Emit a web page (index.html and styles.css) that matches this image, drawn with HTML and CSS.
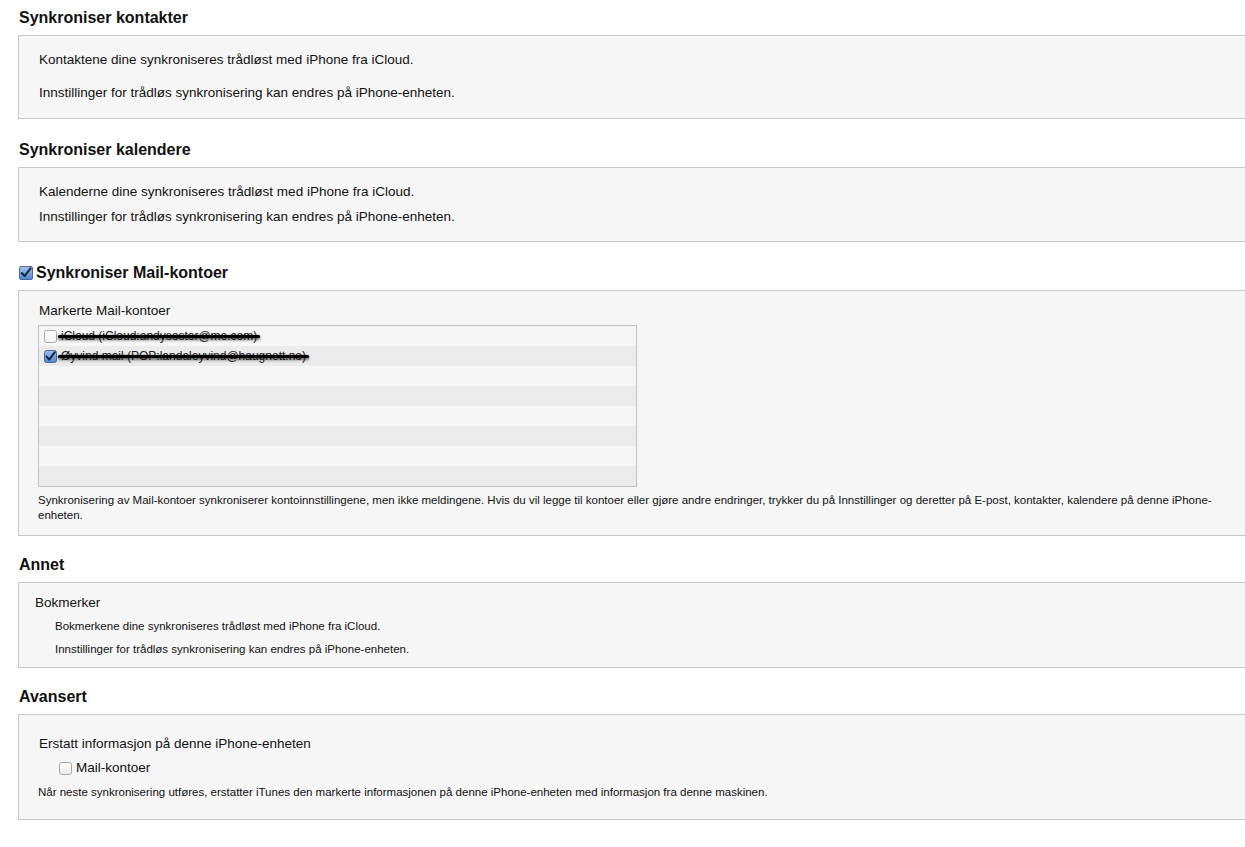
FILE: index.html
```html
<!DOCTYPE html>
<html lang="no">
<head>
<meta charset="utf-8">
<title>Synkronisering</title>
<link rel="stylesheet" href="styles.css">
</head>
<body>
<main class="page">
  <section class="section first">
    <h2 class="heading">Synkroniser kontakter</h2>
    <div class="box box-contacts">
      <p class="line">Kontaktene dine synkroniseres trådløst med iPhone fra iCloud.</p>
      <p class="line second">Innstillinger for trådløs synkronisering kan endres på iPhone-enheten.</p>
    </div>
  </section>

  <section class="section">
    <h2 class="heading">Synkroniser kalendere</h2>
    <div class="box box-calendars">
      <p class="line">Kalenderne dine synkroniseres trådløst med iPhone fra iCloud.</p>
      <p class="line second">Innstillinger for trådløs synkronisering kan endres på iPhone-enheten.</p>
    </div>
  </section>

  <section class="section">
    <h2 class="heading heading-check">
      <svg class="cb" width="14" height="14" viewBox="0 0 14 14"><defs><linearGradient id="gb1" x1="0" y1="0" x2="0" y2="1"><stop offset="0" stop-color="#a5c6ee"/><stop offset="1" stop-color="#4f86d3"/></linearGradient></defs><rect x="0.5" y="0.5" width="13" height="13" rx="1.5" fill="url(#gb1)" stroke="#4a6a9a"/><path d="M2.8 7 L5.6 10.2 L11.6 2.4" fill="none" stroke="#16243d" stroke-width="2" stroke-linecap="round" stroke-linejoin="round"/></svg>
      <span>Synkroniser Mail-kontoer</span>
    </h2>
    <div class="box box-mail">
      <p class="label">Markerte Mail-kontoer</p>
      <div class="list">
        <div class="row">
          <svg class="cb" width="13" height="13" viewBox="0 0 13 13"><defs><linearGradient id="gw1" x1="0" y1="0" x2="0" y2="1"><stop offset="0" stop-color="#ffffff"/><stop offset="1" stop-color="#f0f0f0"/></linearGradient></defs><rect x="0.5" y="0.5" width="12" height="12" rx="2" fill="url(#gw1)" stroke="#a9a9a9"/></svg>
          <span class="account redacted r1">iCloud (iCloud:andysoster@me.com)</span>
        </div>
        <div class="row alt">
          <svg class="cb" width="13" height="13" viewBox="0 0 13 13"><defs><linearGradient id="gb2" x1="0" y1="0" x2="0" y2="1"><stop offset="0" stop-color="#9cc0ec"/><stop offset="1" stop-color="#4f86d3"/></linearGradient></defs><rect x="0.5" y="0.5" width="12" height="12" rx="2" fill="url(#gb2)" stroke="#4a6a9a"/><path d="M2.6 6.6 L5.2 9.6 L10.8 2.2" fill="none" stroke="#16243d" stroke-width="2" stroke-linecap="round" stroke-linejoin="round"/></svg>
          <span class="account redacted r2">Øyvind mail (POP:landaleyvind@haugnett.no)</span>
        </div>
        <div class="row"></div>
        <div class="row alt"></div>
        <div class="row"></div>
        <div class="row alt"></div>
        <div class="row"></div>
        <div class="row alt"></div>
      </div>
      <p class="note">Synkronisering av Mail-kontoer synkroniserer kontoinnstillingene, men ikke meldingene. Hvis du vil legge til kontoer eller gjøre andre endringer, trykker du på Innstillinger og deretter på E-post, kontakter, kalendere på denne iPhone-enheten.</p>
    </div>
  </section>

  <section class="section tight">
    <h2 class="heading">Annet</h2>
    <div class="box box-other">
      <p class="label">Bokmerker</p>
      <p class="sub">Bokmerkene dine synkroniseres trådløst med iPhone fra iCloud.</p>
      <p class="sub second">Innstillinger for trådløs synkronisering kan endres på iPhone-enheten.</p>
    </div>
  </section>

  <section class="section tight">
    <h2 class="heading">Avansert</h2>
    <div class="box box-advanced">
      <p class="label">Erstatt informasjon på denne iPhone-enheten</p>
      <div class="option">
        <svg class="cb" width="13" height="13" viewBox="0 0 13 13"><defs><linearGradient id="gw2" x1="0" y1="0" x2="0" y2="1"><stop offset="0" stop-color="#ffffff"/><stop offset="1" stop-color="#ededed"/></linearGradient></defs><rect x="0.5" y="0.5" width="12" height="12" rx="2.5" fill="url(#gw2)" stroke="#a9a9a9"/></svg>
        <span>Mail-kontoer</span>
      </div>
      <p class="note">Når neste synkronisering utføres, erstatter iTunes den markerte informasjonen på denne iPhone-enheten med informasjon fra denne maskinen.</p>
    </div>
  </section>
</main>
</body>
</html>
```

FILE: styles.css
```css
html, body {
  margin: 0;
  padding: 0;
  background: #ffffff;
}

body {
  font-family: "Liberation Sans", Arial, Helvetica, sans-serif;
  color: #111111;
  overflow: hidden;
}

.page {
  padding: 0 0 0 18px;
}

p {
  margin: 0;
}

.section {
  margin-top: 21px;
}

.section.first {
  margin-top: 8px;
}

.section.tight {
  margin-top: 19px;
}

.heading {
  margin: 0 0 7px 1px;
  font-size: 16px;
  line-height: 20px;
  font-weight: bold;
  color: #111111;
}

.heading-check {
  display: flex;
  align-items: center;
  gap: 3px;
  margin-left: 1px;
}

.box {
  background: #f6f6f6;
  border: 1px solid #c8c8c8;
  border-right: none;
  margin-right: -20px;
  font-size: 13.5px;
  line-height: 16px;
}

.box-contacts {
  padding: 16px 0 17px 20px;
}

.box-contacts .second {
  margin-top: 17px;
}

.box-calendars {
  padding: 16px 0 16px 20px;
}

.box-calendars .second {
  margin-top: 9px;
}

.box-mail {
  padding: 12px 0 12px 19px;
}

.box-mail .label {
  margin-left: 1px;
}

.list {
  width: 597px;
  margin-top: 6px;
  border: 1px solid #c4c4c4;
  background: #f6f6f6;
}

.row {
  height: 20px;
  display: flex;
  align-items: center;
  gap: 4px;
  padding-left: 5px;
  font-size: 12px;
}

.row.alt {
  background: #ebebeb;
}

.redacted {
  position: relative;
  color: #222;
}

.redacted::after {
  content: "";
  position: absolute;
  left: -3px;
  right: -3px;
  top: 7px;
  height: 3px;
  border-radius: 2px;
  background: #000;
  box-shadow: 0 2px 3px rgba(0, 0, 0, 0.55), 0 0 2px rgba(0, 0, 0, 0.5);
}

.note {
  font-size: 11.5px;
  line-height: 15px;
  margin-top: 6px;
  width: 1180px;
}

.box-other {
  padding: 12px 0 10px 16px;
}

.sub {
  font-size: 11.5px;
  line-height: 16px;
  margin-top: 7px;
  margin-left: 20px;
}

.sub.second {
  margin-top: 7px;
}

.box-advanced {
  padding: 21px 0 19px 20px;
}

.option {
  display: flex;
  align-items: center;
  gap: 4px;
  margin-top: 8px;
  margin-left: 20px;
}

.box-advanced .note {
  margin-top: 9px;
  margin-left: -1px;
}

.cb {
  display: block;
  flex: none;
}
```
